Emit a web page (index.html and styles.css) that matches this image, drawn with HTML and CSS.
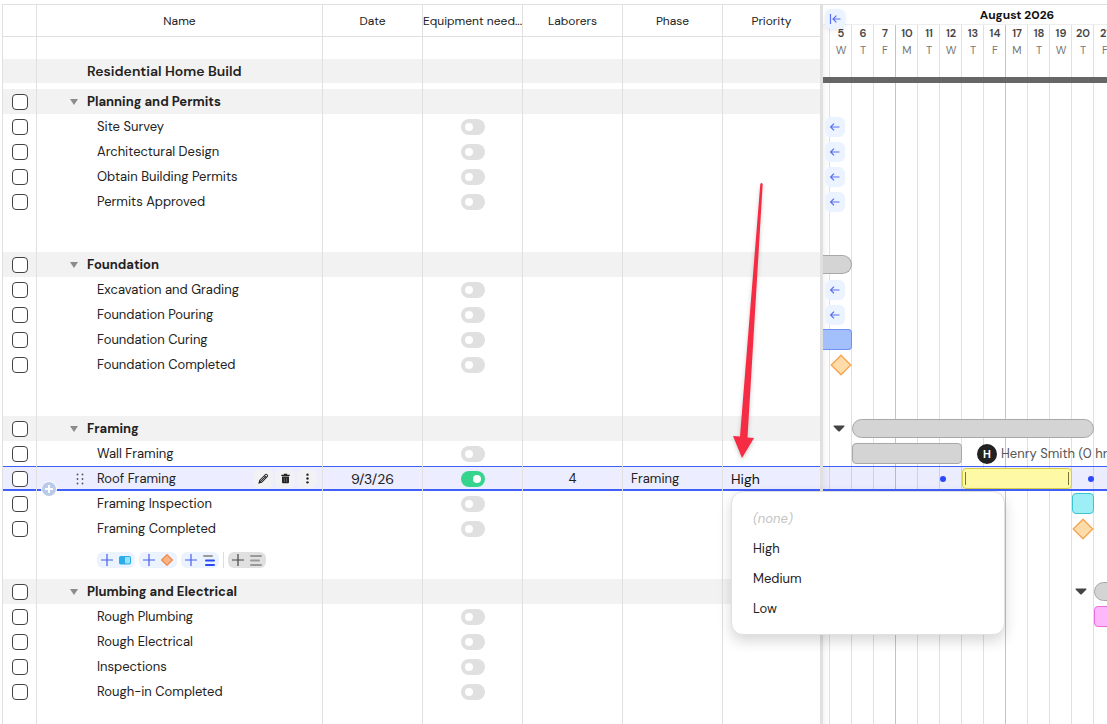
FILE: index.html
```html
<!DOCTYPE html>
<html lang="en">
<head>
    <meta charset="UTF-8">
    <meta name="viewport" content="width=device-width, initial-scale=1.0">
    <title>Residential Home Build</title>
    <link rel="stylesheet" href="styles.css">
</head>
<body>
    <!-- shared icons -->
    <svg class="sprite" aria-hidden="true">
        <symbol id="icon-left" viewBox="0 0 12 12"><path d="M10.5 6H1.8M5 2.6L1.6 6L5 9.4" fill="none" stroke="currentColor" stroke-width="1.2"/></symbol>
        <symbol id="icon-diamond" viewBox="0 0 22 22"><path d="M11 1.2L20.8 11L11 20.8L1.2 11Z" fill="#fddcaa" stroke="#f5a54e" stroke-width="1.3"/></symbol>
        <symbol id="icon-plus" viewBox="0 0 12 12"><path d="M6 0V12M0 6H12" fill="none" stroke="currentColor" stroke-width="1.2"/></symbol>
        <symbol id="icon-caret" viewBox="0 0 8 6"><path d="M0 0H8L4 6Z" fill="currentColor"/></symbol>
    </svg>

    <main class="app">
        <section class="grid-pane">
            <table class="task-table">
                <colgroup>
                    <col class="col-check">
                    <col class="col-name">
                    <col class="col-data">
                    <col class="col-data">
                    <col class="col-data">
                    <col class="col-data">
                    <col class="col-priority">
                </colgroup>
                <thead>
                    <tr>
                        <th></th>
                        <th>Name</th>
                        <th>Date</th>
                        <th>Equipment need...</th>
                        <th>Laborers</th>
                        <th>Phase</th>
                        <th>Priority</th>
                    </tr>
                </thead>
                <tbody>
                    <tr class="spacer-top"><td></td><td></td><td></td><td></td><td></td><td></td><td></td></tr>
                    <tr class="project"><td></td><td><div class="name">Residential Home Build</div></td><td></td><td></td><td></td><td></td><td></td></tr>
                    <tr class="spacer-thin"><td></td><td></td><td></td><td></td><td></td><td></td><td></td></tr>

                    <tr class="group">
                        <td><input type="checkbox" class="check" aria-label="Select Planning and Permits"></td>
                        <td><div class="name"><button class="caret" aria-label="Collapse"><svg><use href="#icon-caret"/></svg></button>Planning and Permits</div></td>
                        <td></td><td></td><td></td><td></td><td></td>
                    </tr>
                    <tr>
                        <td><input type="checkbox" class="check" aria-label="Select Site Survey"></td>
                        <td><div class="name">Site Survey</div></td>
                        <td></td><td><input type="checkbox" class="toggle" aria-label="Equipment needed"></td><td></td><td></td><td></td>
                    </tr>
                    <tr>
                        <td><input type="checkbox" class="check" aria-label="Select Architectural Design"></td>
                        <td><div class="name">Architectural Design</div></td>
                        <td></td><td><input type="checkbox" class="toggle" aria-label="Equipment needed"></td><td></td><td></td><td></td>
                    </tr>
                    <tr>
                        <td><input type="checkbox" class="check" aria-label="Select Obtain Building Permits"></td>
                        <td><div class="name">Obtain Building Permits</div></td>
                        <td></td><td><input type="checkbox" class="toggle" aria-label="Equipment needed"></td><td></td><td></td><td></td>
                    </tr>
                    <tr>
                        <td><input type="checkbox" class="check" aria-label="Select Permits Approved"></td>
                        <td><div class="name">Permits Approved</div></td>
                        <td></td><td><input type="checkbox" class="toggle" aria-label="Equipment needed"></td><td></td><td></td><td></td>
                    </tr>
                    <tr class="spacer"><td></td><td></td><td></td><td></td><td></td><td></td><td></td></tr>

                    <tr class="group">
                        <td><input type="checkbox" class="check" aria-label="Select Foundation"></td>
                        <td><div class="name"><button class="caret" aria-label="Collapse"><svg><use href="#icon-caret"/></svg></button>Foundation</div></td>
                        <td></td><td></td><td></td><td></td><td></td>
                    </tr>
                    <tr>
                        <td><input type="checkbox" class="check" aria-label="Select Excavation and Grading"></td>
                        <td><div class="name">Excavation and Grading</div></td>
                        <td></td><td><input type="checkbox" class="toggle" aria-label="Equipment needed"></td><td></td><td></td><td></td>
                    </tr>
                    <tr>
                        <td><input type="checkbox" class="check" aria-label="Select Foundation Pouring"></td>
                        <td><div class="name">Foundation Pouring</div></td>
                        <td></td><td><input type="checkbox" class="toggle" aria-label="Equipment needed"></td><td></td><td></td><td></td>
                    </tr>
                    <tr>
                        <td><input type="checkbox" class="check" aria-label="Select Foundation Curing"></td>
                        <td><div class="name">Foundation Curing</div></td>
                        <td></td><td><input type="checkbox" class="toggle" aria-label="Equipment needed"></td><td></td><td></td><td></td>
                    </tr>
                    <tr>
                        <td><input type="checkbox" class="check" aria-label="Select Foundation Completed"></td>
                        <td><div class="name">Foundation Completed</div></td>
                        <td></td><td><input type="checkbox" class="toggle" aria-label="Equipment needed"></td><td></td><td></td><td></td>
                    </tr>
                    <tr class="spacer tall"><td></td><td></td><td></td><td></td><td></td><td></td><td></td></tr>

                    <tr class="group">
                        <td><input type="checkbox" class="check" aria-label="Select Framing"></td>
                        <td><div class="name"><button class="caret" aria-label="Collapse"><svg><use href="#icon-caret"/></svg></button>Framing</div></td>
                        <td></td><td></td><td></td><td></td><td></td>
                    </tr>
                    <tr>
                        <td><input type="checkbox" class="check" aria-label="Select Wall Framing"></td>
                        <td><div class="name">Wall Framing</div></td>
                        <td></td><td><input type="checkbox" class="toggle" aria-label="Equipment needed"></td><td></td><td></td><td></td>
                    </tr>
                    <tr class="selected">
                        <td><input type="checkbox" class="check" aria-label="Select Roof Framing"></td>
                        <td class="name-cell">
                            <div class="name">
                                <svg class="drag" viewBox="0 0 8 12" fill="#555"><circle cx="1.5" cy="1.5" r=".9"/><circle cx="6.5" cy="1.5" r=".9"/><circle cx="1.5" cy="6" r=".9"/><circle cx="6.5" cy="6" r=".9"/><circle cx="1.5" cy="10.5" r=".9"/><circle cx="6.5" cy="10.5" r=".9"/></svg>
                                Roof Framing
                                <div class="row-actions">
                                    <button aria-label="Edit"><svg viewBox="0 0 12 12" fill="none" stroke="#222" stroke-width="1.1"><path d="M1.5 10.5L2.2 7.6L7.9 1.9C8.5 1.3 9.3 1.3 9.9 1.9C10.6 2.6 10.6 3.4 10 4L4.3 9.8Z"/><path d="M3.4 8.6L8.2 3.8M7 2.8L9.2 5" /><path d="M1.2 10.8L1.8 8.8L3.2 10.2Z" fill="#222"/></svg></button>
                                    <button aria-label="Delete"><svg viewBox="0 0 12 12" fill="#222"><path d="M4.2 .8H7.8V2H10.6V3.2H1.4V2H4.2Z"/><path d="M2.2 3.8H9.8V10.2Q9.8 11.2 8.8 11.2H3.2Q2.2 11.2 2.2 10.2Z"/><path d="M4.7 5V10M7.3 5V10" stroke="#888" stroke-width=".7"/></svg></button>
                                    <button aria-label="More"><svg viewBox="0 0 12 12" fill="#222"><circle cx="6" cy="1.8" r="1.3"/><circle cx="6" cy="6" r="1.3"/><circle cx="6" cy="10.2" r="1.3"/></svg></button>
                                </div>
                            </div>
                            <button class="insert" aria-label="Insert row"><svg viewBox="0 0 8 8"><path d="M4 0V8M0 4H8" stroke="#fff" stroke-width="1.8"/></svg></button>
                        </td>
                        <td class="date">9/3/26</td>
                        <td><input type="checkbox" class="toggle" aria-label="Equipment needed" checked></td>
                        <td>4</td>
                        <td class="phase">Framing</td>
                        <td class="priority">
                            <button class="priority-value" aria-haspopup="listbox" aria-expanded="true">High</button>
                            <ul class="menu" role="listbox" aria-label="Priority">
                                <li><button class="none" role="option">(none)</button></li>
                                <li><button role="option">High</button></li>
                                <li><button role="option">Medium</button></li>
                                <li><button role="option">Low</button></li>
                            </ul>
                        </td>
                    </tr>
                    <tr>
                        <td><input type="checkbox" class="check" aria-label="Select Framing Inspection"></td>
                        <td><div class="name">Framing Inspection</div></td>
                        <td></td><td><input type="checkbox" class="toggle" aria-label="Equipment needed"></td><td></td><td></td><td></td>
                    </tr>
                    <tr>
                        <td><input type="checkbox" class="check" aria-label="Select Framing Completed"></td>
                        <td><div class="name">Framing Completed</div></td>
                        <td></td><td><input type="checkbox" class="toggle" aria-label="Equipment needed"></td><td></td><td></td><td></td>
                    </tr>
                    <tr class="add-row">
                        <td></td>
                        <td>
                            <div class="add-buttons">
                                <button aria-label="Add task"><svg class="plus"><use href="#icon-plus"/></svg><svg class="kind" viewBox="0 0 12 12"><rect y="2" width="12" height="8.4" rx="1.6" fill="#29aeea"/><rect x="6" y="3" width="5" height="6.4" rx=".8" fill="#98e1fb"/></svg></button>
                                <button aria-label="Add milestone"><svg class="plus"><use href="#icon-plus"/></svg><svg class="kind" viewBox="0 0 12 12"><path d="M6 .7L11.3 6L6 11.3L.7 6Z" fill="#fab384" stroke="#ef8746" stroke-width="1.2"/></svg></button>
                                <button aria-label="Add subgroup"><svg class="plus"><use href="#icon-plus"/></svg><svg class="kind" viewBox="0 0 12 12"><g stroke-width="2" stroke-linecap="round"><path d="M1 2H9" stroke="#999"/><path d="M3 6.5H11M3 11H11" stroke="#2a49fb"/></g></svg></button>
                                <span class="divider"></span>
                                <button class="muted" aria-label="Add group"><svg class="plus"><use href="#icon-plus"/></svg><svg class="kind" viewBox="0 0 12 12"><path d="M1 2H11M1 6.5H9M1 11H11" stroke="#999" stroke-width="2" stroke-linecap="round"/></svg></button>
                            </div>
                        </td>
                        <td></td><td></td><td></td><td></td><td></td>
                    </tr>

                    <tr class="group">
                        <td><input type="checkbox" class="check" aria-label="Select Plumbing and Electrical"></td>
                        <td><div class="name"><button class="caret" aria-label="Collapse"><svg><use href="#icon-caret"/></svg></button>Plumbing and Electrical</div></td>
                        <td></td><td></td><td></td><td></td><td></td>
                    </tr>
                    <tr>
                        <td><input type="checkbox" class="check" aria-label="Select Rough Plumbing"></td>
                        <td><div class="name">Rough Plumbing</div></td>
                        <td></td><td><input type="checkbox" class="toggle" aria-label="Equipment needed"></td><td></td><td></td><td></td>
                    </tr>
                    <tr>
                        <td><input type="checkbox" class="check" aria-label="Select Rough Electrical"></td>
                        <td><div class="name">Rough Electrical</div></td>
                        <td></td><td><input type="checkbox" class="toggle" aria-label="Equipment needed"></td><td></td><td></td><td></td>
                    </tr>
                    <tr>
                        <td><input type="checkbox" class="check" aria-label="Select Inspections"></td>
                        <td><div class="name">Inspections</div></td>
                        <td></td><td><input type="checkbox" class="toggle" aria-label="Equipment needed"></td><td></td><td></td><td></td>
                    </tr>
                    <tr>
                        <td><input type="checkbox" class="check" aria-label="Select Rough-in Completed"></td>
                        <td><div class="name">Rough-in Completed</div></td>
                        <td></td><td><input type="checkbox" class="toggle" aria-label="Equipment needed"></td><td></td><td></td><td></td>
                    </tr>
                    <tr class="spacer"><td></td><td></td><td></td><td></td><td></td><td></td><td></td></tr>
                </tbody>
            </table>
        </section>

        <section class="timeline">
            <button class="jump-start" aria-label="Scroll to start"><svg viewBox="0 0 12 12" fill="none" stroke="currentColor" stroke-width="1.2"><path d="M1.5 1V11M11.5 6H4.2M7.4 2.6L4 6L7.4 9.4"/></svg></button>
            <div class="track month-row"><h2>August 2026</h2></div>
            <div class="timeline-body">
                <div class="track days">
                    <div></div>
                    <div class="day"><b>5</b><span>W</span></div>
                    <div class="day"><b>6</b><span>T</span></div>
                    <div class="day"><b>7</b><span>F</span></div>
                    <div class="day"><b>10</b><span>M</span></div>
                    <div class="day"><b>11</b><span>T</span></div>
                    <div class="day"><b>12</b><span>W</span></div>
                    <div class="day"><b>13</b><span>T</span></div>
                    <div class="day"><b>14</b><span>F</span></div>
                    <div class="day"><b>17</b><span>M</span></div>
                    <div class="day"><b>18</b><span>T</span></div>
                    <div class="day"><b>19</b><span>W</span></div>
                    <div class="day"><b>20</b><span>T</span></div>
                    <div class="day"><b>21</b><span>F</span></div>
                    <div class="day"><b>24</b><span>M</span></div>
                    <div class="day"><b>25</b><span>T</span></div>
                    <div class="day"><b>26</b><span>W</span></div>
                    <div class="day"><b>27</b><span>T</span></div>
                </div>
                <div class="project-bar"></div>

                <!-- Planning and Permits -->
                <div class="track"></div>
                <div class="track"><button class="offscreen" aria-label="Scroll to task"><svg><use href="#icon-left"/></svg></button></div>
                <div class="track"><button class="offscreen" aria-label="Scroll to task"><svg><use href="#icon-left"/></svg></button></div>
                <div class="track"><button class="offscreen" aria-label="Scroll to task"><svg><use href="#icon-left"/></svg></button></div>
                <div class="track"><button class="offscreen" aria-label="Scroll to task"><svg><use href="#icon-left"/></svg></button></div>
                <div class="track-gap"></div>

                <!-- Foundation -->
                <div class="track"><div class="bar summary open-left from-start"></div></div>
                <div class="track"><button class="offscreen" aria-label="Scroll to task"><svg><use href="#icon-left"/></svg></button></div>
                <div class="track"><button class="offscreen" aria-label="Scroll to task"><svg><use href="#icon-left"/></svg></button></div>
                <div class="track"><div class="bar blue open-left from-start"></div></div>
                <div class="track"><svg class="milestone aug-5"><use href="#icon-diamond"/></svg></div>
                <div class="track-gap tall"></div>

                <!-- Framing -->
                <div class="track">
                    <svg class="toggle-arrow aug-5" viewBox="0 0 12 7"><path d="M1 .5H11Q12 .8 11.2 1.8L7 6Q6 7 5 6L.8 1.8Q0 .8 1 .5Z" fill="#444"/></svg>
                    <div class="bar summary aug-6-20"></div>
                </div>
                <div class="track">
                    <div class="bar gray aug-6-12"></div>
                    <div class="assignee"><span class="avatar">H</span>Henry Smith (0 hrs)</div>
                </div>
                <div class="track selected-track">
                    <span class="link-dot aug-12"></span>
                    <div class="bar yellow aug-13-19"></div>
                    <span class="link-dot end aug-20"></span>
                </div>
                <div class="track"><div class="bar teal aug-20"></div></div>
                <div class="track"><svg class="milestone aug-20"><use href="#icon-diamond"/></svg></div>
                <div class="track-gap"></div>

                <!-- Plumbing and Electrical -->
                <div class="track">
                    <svg class="toggle-arrow aug-20" viewBox="0 0 12 7"><path d="M1 .5H11Q12 .8 11.2 1.8L7 6Q6 7 5 6L.8 1.8Q0 .8 1 .5Z" fill="#444"/></svg>
                    <div class="bar summary aug-21-on"></div>
                </div>
                <div class="track"><div class="bar pink aug-21-on"></div></div>
                <div class="track"></div>
                <div class="track"></div>
                <div class="track"></div>
                <div class="track-gap"></div>
            </div>
        </section>

        <svg class="pointer" viewBox="0 0 40 290" aria-hidden="true">
            <path d="M30.3 4Q31.5 2 32.7 4L17.5 257.5L24 258L12 278L3 256L10 256.5Z" fill="#f52c44"/>
        </svg>
    </main>
</body>
</html>
```

FILE: styles.css
```css
* {
    margin: 0;
    padding: 0;
    box-sizing: border-box;
}

body {
    font-family: "DM Sans", Inter, "Liberation Sans", sans-serif;
    font-size: 13px;
    color: #222;
    background: #fff;
    height: 100vh;
    overflow: hidden;
}

button {
    font: inherit;
    color: inherit;
    background: none;
    border: none;
    cursor: pointer;
}

.sprite {
    display: none;
}

.app {
    position: relative;
    display: flex;
    height: 100vh;
    margin-top: 4px;
    margin-left: 2px;
    border-top: 1px solid #e0e0e0;
}

/* Task table */
.grid-pane {
    flex: none;
    border-left: 1px solid #e0e0e0;
    position: relative;
    z-index: 2;
}

.task-table {
    width: 817px;
    table-layout: fixed;
    border-collapse: separate;
    border-spacing: 0;
}

.col-check {
    width: 34px;
}

.col-name {
    width: 286px;
}

.col-data {
    width: 100px;
}

.col-priority {
    width: 97px;
}

th,
td {
    height: 25px;
    line-height: 20px;
    border-right: 1px solid #e0e0e0;
    text-align: center;
    vertical-align: middle;
    white-space: nowrap;
}

th:last-child,
td:last-child {
    border-right: none;
}

th {
    height: 32px;
    font-size: 12px;
    font-weight: 400;
    border-bottom: 1px solid #e0e0e0;
    overflow: hidden;
}

.spacer-top td {
    height: 22px;
}

.spacer-thin td {
    height: 6px;
}

.spacer td,
.add-row td {
    height: 38px;
}

.spacer.tall td {
    height: 39px;
}

.project td {
    height: 24px;
    background: #f2f2f2;
}

.group td {
    background: #f2f2f2;
}

.name {
    display: flex;
    align-items: center;
    padding-left: 60px;
}

.project .name {
    padding-left: 50px;
    font-size: 14px;
    font-weight: 600;
}

.group .name {
    padding-left: 33px;
    gap: 9px;
    font-weight: 700;
}

.caret {
    width: 8px;
    height: 20px;
    display: flex;
    align-items: center;
    color: #8c8c8c;
}

.caret svg {
    width: 8px;
    height: 6px;
}

.check {
    appearance: none;
    display: block;
    width: 16px;
    height: 16px;
    margin: 0 auto;
    border: 1px solid #444;
    border-radius: 4px;
    background: #fff;
}

.toggle {
    appearance: none;
    display: flex;
    align-items: center;
    width: 24px;
    height: 16px;
    margin: 0 auto;
    padding: 0 4px;
    border-radius: 8px;
    background: #e0e0e0;
}

.toggle::before {
    content: "";
    width: 8px;
    height: 8px;
    border-radius: 50%;
    background: #fff;
}

.toggle:checked {
    background: #36d58d;
    justify-content: flex-end;
}

/* Selected row */
.selected td {
    background: #ecedfe;
    box-shadow: inset 0 1px #3f5ffa, inset 0 -2px #3f5ffa;
}

.name-cell,
.priority {
    position: relative;
}

.selected .name {
    padding-left: 39px;
}

.drag {
    width: 8px;
    height: 12px;
    margin-right: 13px;
}

.row-actions {
    display: flex;
    gap: 2px;
    margin-left: auto;
    padding-right: 5px;
}

.row-actions button {
    width: 20px;
    height: 18px;
    display: flex;
    align-items: center;
    justify-content: center;
    border-radius: 5px;
    background: #f2f2f4;
}

.row-actions svg {
    width: 11px;
    height: 11px;
}

.insert {
    position: absolute;
    left: 4px;
    bottom: -6px;
    width: 16px;
    height: 16px;
    display: flex;
    align-items: center;
    justify-content: center;
    border: 1px solid #fff;
    border-radius: 50%;
    background: #b9cbe8;
}

.insert svg {
    width: 8px;
    height: 8px;
}

td.date {
    font-size: 14px;
}

td.phase {
    text-align: left;
    padding-left: 8px;
}

td.priority {
    text-align: left;
    padding-left: 8px;
}

.priority-value {
    display: block;
    line-height: 20px;
    font-size: 14px;
    color: #111;
}

.menu {
    position: absolute;
    top: 25px;
    left: 8px;
    width: 274px;
    padding: 12px 0 10px;
    list-style: none;
    background: #fff;
    border: 1px solid #e0e0e0;
    border-radius: 12px;
    box-shadow: 0 6px 14px rgba(0, 0, 0, 0.16);
}

.menu button {
    display: block;
    width: 100%;
    height: 30px;
    padding-left: 21px;
    text-align: left;
}

.menu .none {
    color: #c4c4c4;
    font-style: italic;
}

/* Add buttons under a group */
.add-buttons {
    display: flex;
    align-items: center;
    gap: 4px;
    padding-left: 60px;
}

.add-buttons button {
    width: 38px;
    height: 16px;
    display: flex;
    align-items: center;
    justify-content: center;
    gap: 6px;
    border-radius: 6px;
    background: #eaf3ff;
    color: #4a5cf0;
}

.add-buttons svg {
    width: 12px;
    height: 12px;
}

.add-buttons .muted {
    background: #e0e0e0;
    color: #444;
}

.divider {
    width: 1px;
    height: 16px;
    background: #ddd;
}

/* Timeline */
.timeline {
    flex: 1;
    min-width: 0;
    position: relative;
    overflow: hidden;
    border-left: 3px solid #e0e0e0;
}

.track {
    display: grid;
    grid-template-columns: 7px repeat(17, 22px);
    grid-template-rows: 25px;
    align-items: center;
}

.month-row {
    grid-template-rows: 19px;
    border-bottom: 1px solid #eee;
}

.month-row h2 {
    grid-column: 2 / -1;
    font-size: 12px;
    font-weight: 700;
    color: #111;
    text-align: center;
}

/* A line per day, a darker one where the week starts */
.timeline-body {
    background-image:
        linear-gradient(to right, #c4c4c4 1px, transparent 1px),
        linear-gradient(to right, #e0e0e0 1px, transparent 1px),
        linear-gradient(to right, #f5f5f5, #fff 6px);
    background-size: 110px 100%, 22px 100%, 100% 100%;
    background-position: 72px 0, 6px 0, 0 0;
}

.days {
    grid-template-rows: 34px;
}

.day {
    display: flex;
    flex-direction: column;
    align-items: center;
    font-size: 11px;
    line-height: 17px;
    color: #777;
}

.day b {
    font-weight: 600;
    color: #444;
}

.project-bar {
    height: 24px;
    margin-bottom: 6px;
    border-bottom: 6px solid #666;
}

.track-gap {
    height: 38px;
}

.track-gap.tall {
    height: 39px;
}

.jump-start,
.offscreen {
    width: 20px;
    height: 20px;
    display: flex;
    align-items: center;
    justify-content: center;
    border-radius: 6px;
    background: #eaf3ff;
    color: #5a6ff5;
}

.offscreen {
    grid-column: 1 / 3;
    margin-left: 2px;
}

.jump-start {
    position: absolute;
    top: 4px;
    left: 2px;
    box-shadow: 0 2px 4px rgba(0, 0, 0, 0.08);
}

.jump-start svg,
.offscreen svg {
    width: 12px;
    height: 12px;
}

.bar {
    grid-row: 1;
    height: 21px;
    border: 1px solid;
    border-radius: 4px;
}

.summary {
    height: 19px;
    background: #d4d4d4;
    border-color: #a8a8a8;
    border-radius: 10px;
}

.gray {
    background: #d4d4d4;
    border-color: #a8a8a8;
}

.blue {
    background: #a3bffc;
    border-color: #6f90f5;
}

.yellow {
    padding: 3px 2px;
    background: #fdf9a4;
    border-color: #d8cd48;
}

/* resize handles at both ends of the bar */
.yellow::before {
    content: "";
    display: block;
    height: 13px;
    border-left: 1px solid #77733a;
    border-right: 1px solid #77733a;
}

.teal {
    background: #9eeef6;
    border-color: #3cc4d2;
}

.pink {
    background: #fcb8fa;
    border-color: #ea6fdc;
}

.open-left {
    border-left: none;
    border-top-left-radius: 0;
    border-bottom-left-radius: 0;
}

.from-start {
    grid-column: 1 / 3;
}

.aug-5 {
    grid-column: 2;
}

.aug-6-12 {
    grid-column: 3 / 8;
}

.aug-6-20 {
    grid-column: 3 / 14;
}

.aug-12 {
    grid-column: 7;
}

.aug-13-19 {
    grid-column: 8 / 13;
}

.aug-20 {
    grid-column: 13;
}

.aug-21-on {
    grid-column: 14 / -1;
}

.milestone {
    width: 22px;
    height: 22px;
}

.toggle-arrow {
    width: 12px;
    height: 7px;
    margin-left: 3px;
}

.assignee {
    grid-column: 8 / -1;
    display: flex;
    align-items: center;
    gap: 4px;
    padding-left: 15px;
    color: #555;
    white-space: nowrap;
}

.avatar {
    width: 20px;
    height: 20px;
    border-radius: 50%;
    background: #222;
    color: #fff;
    font-size: 11px;
    font-weight: 700;
    line-height: 20px;
    text-align: center;
}

.selected-track {
    background: rgba(63, 72, 250, 0.1);
    box-shadow: inset 0 1px #3f5ffa, inset 0 -2px #3f5ffa;
}

.link-dot {
    width: 6px;
    height: 6px;
    border-radius: 50%;
    background: #2b49fb;
}

.link-dot.end {
    justify-self: end;
}

/* Red arrow drawn over the table */
.pointer {
    position: absolute;
    z-index: 3;
    left: 728px;
    top: 175px;
    width: 40px;
    height: 290px;
    filter: drop-shadow(0 2px 2px rgba(0, 0, 0, 0.2));
    pointer-events: none;
}
```
